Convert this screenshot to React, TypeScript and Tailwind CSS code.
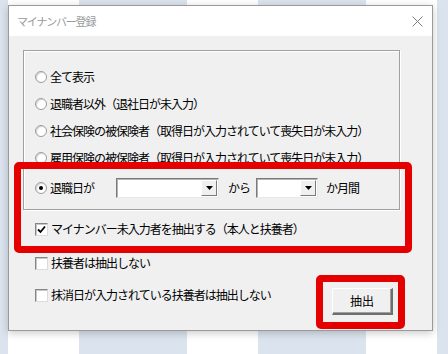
import React from "react";

function Radio({ checked = false }: { checked?: boolean }) {
  return (
    <span className="w-[12px] h-[12px] rounded-full border border-[#9c9c9c] bg-white shadow-[inset_1px_1px_1px_rgba(0,0,0,0.18)] flex items-center justify-center shrink-0">
      {checked && <span className="w-[4px] h-[4px] rounded-full bg-black" />}
    </span>
  );
}

function Check({ checked = false }: { checked?: boolean }) {
  return (
    <span className="w-[13px] h-[13px] border-t border-l border-r border-b border-t-[#868686] border-l-[#868686] border-r-[#dcdcdc] border-b-[#dcdcdc] bg-white flex items-center justify-center shrink-0 shadow-[inset_1px_1px_0_#c8c8c8]">
      {checked && (
        <svg width="9" height="9" viewBox="0 0 9 9">
          <path d="M1 4.5 L3.5 7 L8 1.5" stroke="#000" strokeWidth="1.8" fill="none" />
        </svg>
      )}
    </span>
  );
}

function Combo({ w }: { w: string }) {
  return (
    <div className={`${w} h-[20px] bg-white border-t border-l border-r border-b border-t-[#7a7a7a] border-l-[#7a7a7a] border-r-[#e8e8e8] border-b-[#e8e8e8] shadow-[inset_1px_1px_0_#b4b4b4] flex justify-end p-[1px]`}>
      <div className="w-[16px] h-full bg-[#f0f0f0] border-t border-l border-r border-b border-t-white border-l-white border-r-[#7a7a7a] border-b-[#7a7a7a] flex items-center justify-center">
        <svg width="7" height="4" viewBox="0 0 7 4">
          <path d="M0 0 H7 L3.5 4 Z" fill="#000" />
        </svg>
      </div>
    </div>
  );
}

export default function App() {
  return (
    <div className="relative w-[448px] h-[354px] overflow-hidden font-['Noto_Sans_CJK_JP','Noto_Sans',sans-serif] text-[12px] tracking-[-1px] text-black">
      <div className="absolute inset-0 flex">
        <div className="w-[8px] bg-[#dbe4ee]" />
        <div className="w-[71px] bg-white" />
        <div className="w-[108px] bg-[#dbe4ee]" />
        <div className="w-[71px] bg-white" />
        <div className="w-[108px] bg-[#dbe4ee]" />
        <div className="w-[71px] bg-white" />
        <div className="flex-1 bg-[#dbe4ee]" />
      </div>

      <div className="relative ml-[8px] mt-[5px] w-[425px] h-[326px] border border-[#9a9a9a] bg-[#f0f0f0] shadow-[0_2px_8px_rgba(0,0,0,0.22)] flex flex-col">
        <div className="h-[30px] bg-white flex items-center justify-between pl-[8px] pr-[9px]">
          <span className="text-[11px] tracking-[-1.2px] text-[#9a9a9a]">マイナンバー登録</span>
          <svg width="11" height="11" viewBox="0 0 11 11">
            <path d="M0.5 0.5 L10.5 10.5 M10.5 0.5 L0.5 10.5" stroke="#7c7c7c" strokeWidth="1" />
          </svg>
        </div>

        <div className="flex-1 flex flex-col pt-[14px] pl-[14px]">
          <div className="w-[377px] h-[160px] border border-[#a0a0a0] shadow-[inset_1px_1px_0_#fff,1px_1px_0_#fff] flex flex-col pt-[12px] pl-[11px]">
            <div className="h-[27px] flex items-center gap-[3px]">
              <Radio />
              <span>全て表示</span>
            </div>
            <div className="h-[27px] flex items-center gap-[3px]">
              <Radio />
              <span>退職者以外（退社日が未入力）</span>
            </div>
            <div className="h-[27px] flex items-center gap-[3px]">
              <Radio />
              <span>社会保険の被保険者（取得日が入力されていて喪失日が未入力）</span>
            </div>
            <div className="h-[27px] flex items-center gap-[3px]">
              <Radio />
              <span>雇用保険の被保険者（取得日が入力されていて喪失日が未入力）</span>
            </div>
            <div className="h-[34px] flex items-center">
              <Radio checked />
              <span className="w-[69px] pl-[3px]">退職日が</span>
              <Combo w="w-[103px]" />
              <span className="w-[37px] pl-[9px]">から</span>
              <Combo w="w-[62px]" />
              <span className="pl-[8px]">か月間</span>
            </div>
          </div>

          <div className="flex flex-col pl-[12px] pt-[8px]">
            <div className="h-[22px] flex items-center gap-[3px]">
              <Check checked />
              <span>マイナンバー未入力者を抽出する（本人と扶養者）</span>
            </div>
            <div className="h-[22px] mt-[12px] flex items-center gap-[3px]">
              <Check />
              <span>扶養者は抽出しない</span>
            </div>
            <div className="flex items-start mt-[10px]">
              <div className="h-[22px] flex items-center gap-[3px]">
                <Check />
                <span>抹消日が入力されている扶養者は抽出しない</span>
              </div>
              <button className="ml-auto mr-[39px] mt-[4px] w-[61px] h-[27px] bg-[#f0f0f0] border-t border-l border-r-2 border-b-2 border-t-white border-l-white border-r-[#6e6e6e] border-b-[#6e6e6e] shadow-[inset_-1px_-1px_0_#a0a0a0] flex items-center justify-center text-[12px] tracking-[0px]">
                抽出
              </button>
            </div>
          </div>
        </div>
      </div>

      <div className="absolute left-[14px] top-[162px] w-[398px] h-[91px] border-[7px] border-[#e50000] rounded-[5px]" />
      <div className="absolute left-[316px] top-[275px] w-[89px] h-[54px] border-[7px] border-[#e50000] rounded-[5px]" />
    </div>
  );
}
